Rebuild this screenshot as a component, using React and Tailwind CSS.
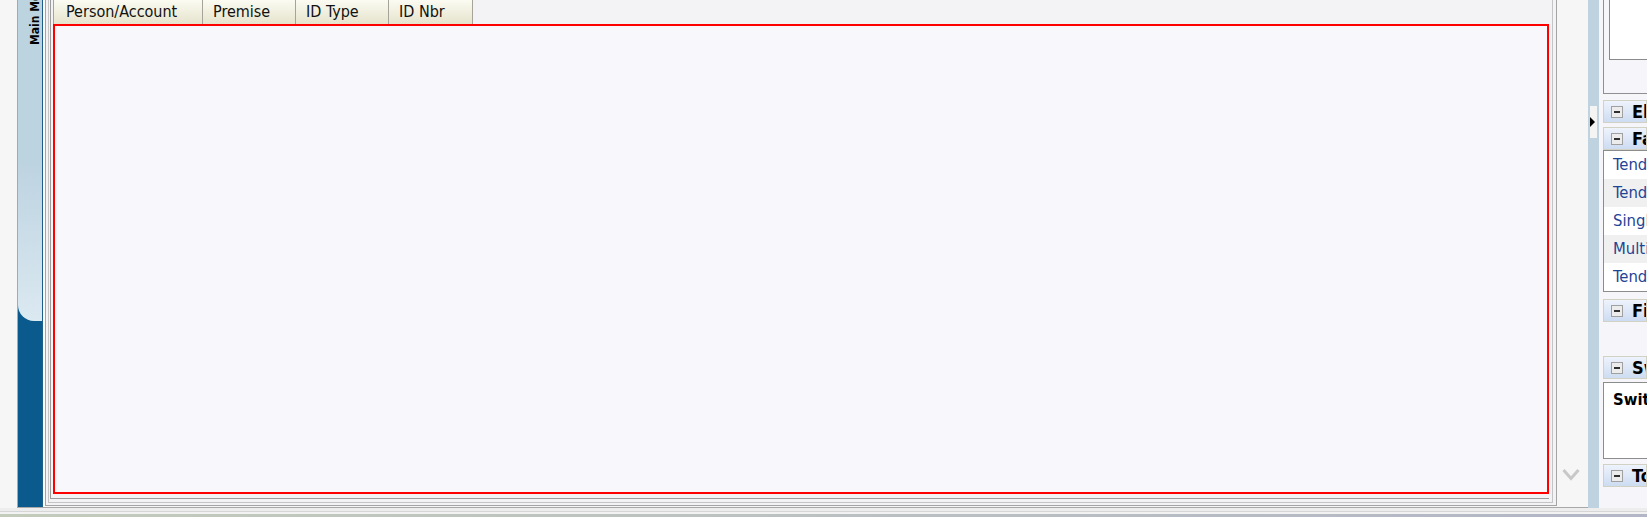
const tabs = [
  { label: 'Person/Account', w: 'w-[150px]', pl: 'pl-[12px]' },
  { label: 'Premise', w: 'w-[93px]', pl: 'pl-[10px]' },
  { label: 'ID Type', w: 'w-[93px]', pl: 'pl-[10px]' },
  { label: 'ID Nbr', w: 'w-[84px]', pl: 'pl-[10px]' },
];

const favorites = ['Tender Control', 'Tender Search', 'Single Payment', 'Multi Payment', 'Tender Deposit'];

function SectionHeader({ label }) {
  return (
    <div className="h-[23px] flex items-center border border-[#d2d2c4] bg-gradient-to-b from-[#eef3fc] to-[#cddcf2] whitespace-nowrap overflow-hidden">
      <span className="ml-[7px] w-[12px] h-[12px] flex items-center justify-center border border-[#a0a0a0] bg-[#ececec] shrink-0">
        <span className="w-[6px] h-[2px] bg-[#303030]" />
      </span>
      <span className="ml-[9px] font-bold text-[18px] text-black">{label}</span>
    </div>
  );
}

export default function App() {
  return (
    <div className="w-[1647px] h-[517px] bg-[#f6f6f6] flex flex-col overflow-hidden font-['DejaVu_Sans_Condensed','DejaVu_Sans',sans-serif]">
      <div className="h-[508px] flex">
        <div className="w-[17px] bg-[#f6f6f6]" />

        <div className="w-[1571px] flex border-l border-b border-[#a8a8a8]">
          {/* vertical tab */}
          <div className="w-[25px] flex flex-col bg-[#0b5a8e] border-r border-[#1d5d8a] pb-[1px]">
            <div className="h-[321px] bg-gradient-to-b from-[#bcd3e0] via-[#bcd3e0] to-[#dbe9f1] rounded-bl-[16px] overflow-hidden">
              <div className="h-[45px] w-[15px] ml-[10px] flex">
                <span className="[writing-mode:vertical-rl] rotate-180 whitespace-nowrap font-bold text-[12px] leading-[15px] text-black">
                  Main Menu
                </span>
              </div>
            </div>
          </div>
          <div className="w-[2px] bg-[#fbfbfb]" />

          {/* content frame */}
          <div className="flex-1 flex flex-col border-l border-r border-b border-[#a4a4a4] bg-[#f3f3f6] pl-[2px] pr-[3px] pb-[2px] mb-[1px]">
            <div className="flex-1 flex flex-col border-l border-r border-b border-[#c4c4c4] bg-[#f3f3f6] pl-[1px] pr-[3px] pb-[3px]">
              <div className="flex-1 flex flex-col border-l border-b border-[#9c9c9c] pl-[2px] pb-[4px]">
                <div className="h-[24px] flex">
                  {tabs.map((t) => (
                    <div
                      key={t.label}
                      className={`${t.w} ${t.pl} h-full flex items-center border-r border-[#a6a49a] first:border-l bg-gradient-to-b from-[#fbfbf2] to-[#e6e4cd] text-[16px] text-[#111] whitespace-nowrap`}
                    >
                      {t.label}
                    </div>
                  ))}
                </div>
                <div className="flex-1 border-2 border-[#ff0000] bg-[#f8f8fc]" />
              </div>
            </div>
          </div>

          {/* scroll column */}
          <div className="w-[31px] flex flex-col justify-end items-center bg-[#f6f6f6] pb-[25px]">
            <svg width="18" height="14" viewBox="0 0 18 14" className="mr-[4px]">
              <polyline points="1.5,2 9,10.5 16.5,2" fill="none" stroke="#c8c8c8" strokeWidth="3" />
            </svg>
          </div>
        </div>

        {/* collapse strip */}
        <div className="w-[11px] bg-[#bed3df] flex flex-col">
          <div className="mt-[106px] ml-[2px] w-[7px] h-[32px] bg-[#f4f4f4] flex items-center">
            <svg width="6" height="10" viewBox="0 0 6 10">
              <polygon points="0,0 5,5 0,10" fill="#000" />
            </svg>
          </div>
        </div>

        {/* right dashboard */}
        <div className="flex-1 flex flex-col bg-[#f6f6fa] pl-[4px] overflow-hidden text-[16.5px]">
          <div className="h-[94px] border-l border-b border-[#909090] pl-[5px]">
            <div className="h-[60px] border-l border-b border-[#8a8a8a] bg-white" />
          </div>
          <div className="mt-[6px]">
            <SectionHeader label="Elements" />
          </div>
          <div className="mt-[4px]">
            <SectionHeader label="Favorites" />
          </div>
          <div className="h-[142px] border-l border-b border-t border-[#8c8c8c] flex flex-col">
            {favorites.map((f, i) => (
              <div
                key={f}
                className={`h-[28px] flex items-center pl-[9px] whitespace-nowrap text-[#1e4496] ${i % 2 === 1 ? 'bg-[#f0f0f0]' : 'bg-white'}`}
              >
                {f}
              </div>
            ))}
          </div>
          <div className="mt-[7px]">
            <SectionHeader label="Find" />
          </div>
          <div className="h-[34px]" />
          <SectionHeader label="Switch" />
          <div className="mt-[3px] h-[77px] border-l border-t border-b border-[#8c8c8c] bg-white pl-[9px] pt-[5px]">
            <span className="font-bold whitespace-nowrap text-black">Switch Language</span>
          </div>
          <div className="mt-[5px]">
            <SectionHeader label="To Do" />
          </div>
        </div>
      </div>

      {/* bottom strip */}
      <div className="h-[9px] flex flex-col">
        <div className="h-[3px] bg-[#ededed]" />
        <div className="h-[1px] bg-[#d6d6d6]" />
        <div className="h-[2px] bg-[#f2f2f2]" />
        <div className="flex-1 bg-gradient-to-r from-[#c3cbbb] to-[#b2b6c6]" />
      </div>
    </div>
  );
}
